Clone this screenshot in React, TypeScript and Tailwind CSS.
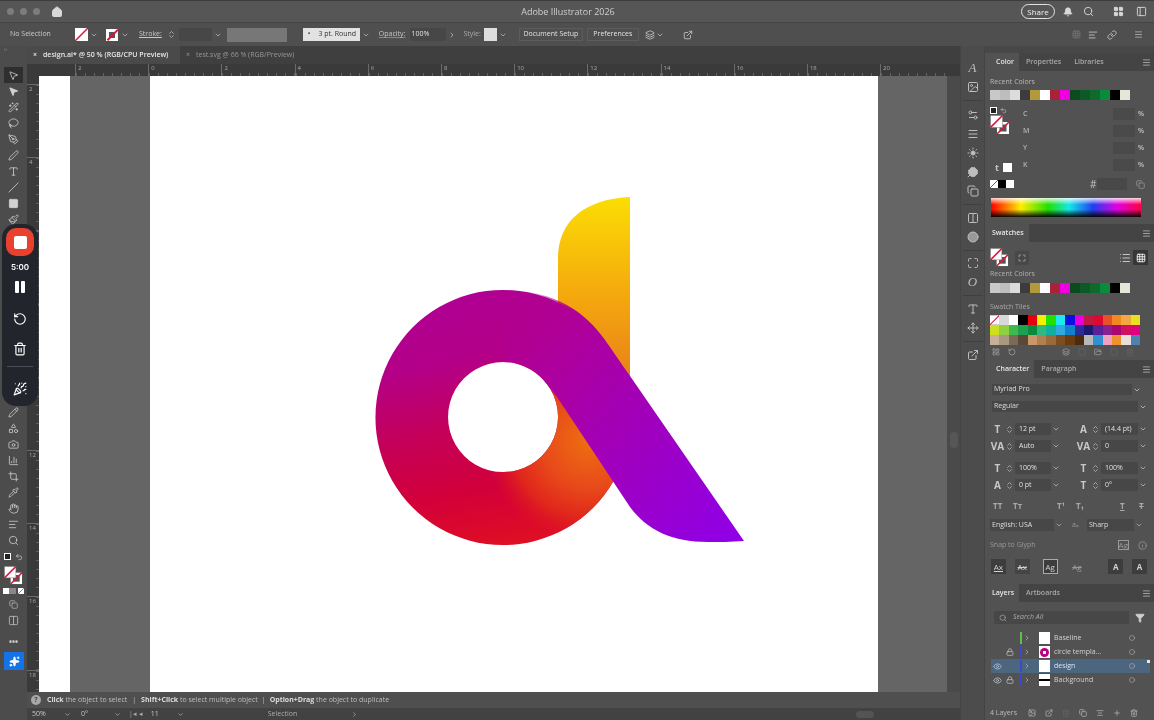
import React from "react";
import {
  MousePointer2, Wand2, Lasso, PenTool, Pen, Type, Slash, Square, Paintbrush, Pencil, Layers, Camera, BarChart3, Crop,
  Pipette, Hand, AlignLeft, Search, RotateCcw, Trash2, PartyPopper, ChevronDown, ChevronRight, ChevronsUpDown, Bell,
  Eye, Lock, Filter, Menu, Sun, Clover, Copy, House, Info, ExternalLink, LayoutGrid, List, Grid3x3, Sparkles, FolderOpen,
  Plus, Circle, PanelLeft, Columns2, Shapes, Undo2, Link, Settings2, AlignCenter, Maximize, Image, Move
} from "lucide-react";

const recent = ["#c8c8c8", "#bdbdbd", "#dcdcdc", "#3d3a40", "#b29a3a", "#ffffff", "#a8233a", "#ee00e0", "#0c4a20", "#0d5a26", "#0f6a2d", "#0a8a3c", "#000000", "#e6e6d8"];
const tiles = [
  "#ffffff", "#d8d8d8", "#ffffff", "#000000", "#e60012", "#f5ee00", "#22e000", "#1fe8f0", "#0a10e0", "#e600e0", "#c01a40", "#dd0a30", "#e8502a", "#f08a20", "#f0a840", "#e8e020",
  "#cce020", "#8fcf40", "#40b850", "#1ea050", "#0a8a3c", "#30b880", "#10b0a0", "#30a8e0", "#1080c8", "#2a2a98", "#1a1a70", "#5a2098", "#8a2090", "#a80870", "#d01060", "#e00080",
  "#c8b098", "#a89880", "#7a6a58", "#5a4838", "#c8986a", "#b08050", "#986a3c", "#7a4e20", "#6a3a10", "#4a2a10", "#b8b8b8", "#3090d0", "#f0a0c0", "#f09030", "#e8e0d8", "#5080b0",
];

function None({ className = "" }: { className?: string }) {
  return (
    <svg viewBox="0 0 14 14" className={className}>
      <rect x="0" y="0" width="14" height="14" fill="#fff" />
      <line x1="0" y1="14" x2="14" y2="0" stroke="#d8163c" strokeWidth="1.6" />
    </svg>
  );
}

function Proxy({ className = "" }: { className?: string }) {
  return (
    <svg viewBox="0 0 20 20" className={className}>
      <rect x="7" y="7" width="12" height="12" fill="#fff" />
      <rect x="9.5" y="9.5" width="7" height="7" fill="#555" />
      <line x1="7" y1="19" x2="19" y2="7" stroke="#d8163c" strokeWidth="1.6" />
      <rect x="0.5" y="0.5" width="12" height="12" fill="#fff" stroke="#777" strokeWidth="0.5" />
      <line x1="0.5" y1="12.5" x2="12.5" y2="0.5" stroke="#d8163c" strokeWidth="1.6" />
    </svg>
  );
}

function Tool({ icon: I, active, filled }: { icon: any; active?: boolean; filled?: boolean }) {
  return (
    <div className={`w-[19px] h-[16px] mx-auto flex items-center justify-center ${active ? "bg-[#2f2f2f]" : ""}`}>
      <I size={11} strokeWidth={1.7} className="text-[#d2d2d2]" fill={filled ? "#d2d2d2" : "none"} />
    </div>
  );
}

function HRuler() {
  const labels = ["2", "0", "2", "4", "6", "8", "10", "12", "14", "16", "18", "20"];
  return (
    <div className="h-[12px] bg-[#3a3a3a] flex pl-[48px] overflow-hidden shrink-0">
      {labels.map((l, i) => (
        <div key={i} className="w-[73.2px] shrink-0 border-l border-[#6a6a6a] relative pl-[2px] text-[6px] leading-[9px] text-[#a8a8a8]">
          {l}
          <div className="absolute left-0 right-0 bottom-0 h-[3px] bg-[repeating-linear-gradient(90deg,#626262_0,#626262_1px,transparent_1px,transparent_9px)]" />
        </div>
      ))}
    </div>
  );
}

function VRuler() {
  const labels = ["2", "4", "6", "8", "10", "12", "14", "16", "18"];
  return (
    <div className="w-[12px] bg-[#3a3a3a] flex flex-col pt-[8px] overflow-hidden shrink-0">
      {labels.map((l, i) => (
        <div key={i} className="h-[73.2px] shrink-0 border-t border-[#6a6a6a] relative text-[6px] text-[#a8a8a8] pl-[2px] leading-[9px]">
          {l}
          <div className="absolute top-0 bottom-0 right-0 w-[3px] bg-[repeating-linear-gradient(180deg,#626262_0,#626262_1px,transparent_1px,transparent_9px)]" />
        </div>
      ))}
    </div>
  );
}

const RING = "M503 290 A127.5 127.5 0 1 1 502.9 290 Z M503 362 A55 55 0 1 0 503.1 362 Z";

function Logo() {
  return (
    <svg viewBox="150 76 728 616" className="w-full h-full block">
      <defs>
        <linearGradient id="y" gradientUnits="userSpaceOnUse" x1="595" y1="197" x2="595" y2="380">
          <stop offset="0" stopColor="#fbdd04" />
          <stop offset="0.55" stopColor="#f4a70e" />
          <stop offset="1" stopColor="#e8801a" />
        </linearGradient>
        <linearGradient id="r" gradientUnits="userSpaceOnUse" x1="490" y1="285" x2="540" y2="545">
          <stop offset="0" stopColor="#b00094" />
          <stop offset="0.26" stopColor="#b40088" />
          <stop offset="0.5" stopColor="#c4005c" />
          <stop offset="0.75" stopColor="#d2003a" />
          <stop offset="0.92" stopColor="#dc0a28" />
          <stop offset="1" stopColor="#de1224" />
        </linearGradient>
        <radialGradient id="o" gradientUnits="userSpaceOnUse" cx="590" cy="440" r="105">
          <stop offset="0" stopColor="#ee7010" />
          <stop offset="0.45" stopColor="#e84a1a" />
          <stop offset="0.75" stopColor="#e0261c" />
          <stop offset="1" stopColor="#de1224" stopOpacity="0" />
        </radialGradient>
        <linearGradient id="b" gradientUnits="userSpaceOnUse" x1="490" y1="322" x2="745" y2="540">
          <stop offset="0" stopColor="#b00094" stopOpacity="0" />
          <stop offset="0.16" stopColor="#b00096" />
          <stop offset="1" stopColor="#8f00ea" />
        </linearGradient>
      </defs>
      <path d="M630 197 C586 199 558 220 558 258 L558 310 L630 385 Z" fill="url(#y)" />
      <path fillRule="evenodd" d={RING} fill="url(#r)" />
      <path fillRule="evenodd" d={RING} fill="url(#o)" />
      <path d="M503 290 C544 290 578 304 602 336 C606 341 610 347 630 376 L744 541 C730 542 720 542 708 542 C672 542 647 530 630 507 L557 397 L544 380.4 A55 55 0 0 0 503 362 Z" fill="url(#b)" />
    </svg>
  );
}

function PanelTabs({ tabs, pad = "pl-[7px]" }: { tabs: string[]; pad?: string }) {
  return (
    <div className="h-[18px] bg-[#444] flex items-stretch shrink-0">
      {tabs.map((t, i) => (
        <div key={t} className={`flex items-center text-[7px] font-semibold ${i === 0 ? `bg-[#525252] text-[#e6e6e6] pr-[5px] ${pad}` : "text-[#a9a9a9] pl-[7px] pr-[6px]"}`}>{t}</div>
      ))}
      <div className="flex-1" />
      <Menu size={9} className="self-center mr-[3px] text-[#bdbdbd]" />
    </div>
  );
}

function Spin() {
  return <ChevronsUpDown size={9} className="text-[#bcbcbc] shrink-0" />;
}

function CharField({ glyph, value, w }: { glyph: string; value: string; w: string }) {
  return (
    <div className={`flex items-center ${w}`}>
      <span className="w-[15px] text-center text-[10px] font-bold text-[#c8c8c8] leading-none">{glyph}</span>
      <Spin />
      <div className="flex-1 h-[12px] ml-[1px] bg-[#474747] flex items-center pl-[4px] text-[7px] text-[#e0e0e0]">{value}</div>
      <ChevronDown size={8} className="text-[#cfcfcf] ml-[1px]" />
    </div>
  );
}

function LayerRow({ name, color, eye, lock, sel, thumb }: { name: string; color: string; eye?: boolean; lock?: boolean; sel?: boolean; thumb?: React.ReactNode }) {
  return (
    <div className={`relative h-[14px] ml-[6px] mr-[4px] flex items-center ${sel ? "bg-[#4d6680]" : ""}`}>
      <div className="w-[12px] flex justify-center">{eye && <Eye size={9} className="text-[#b8c8d8]" />}</div>
      <div className="w-[14px] flex justify-center">{lock && <Lock size={8} className="text-[#c8c8c8]" />}</div>
      <div className={`w-[2px] h-[12px] ${color} ml-[3px]`} />
      <ChevronRight size={8} className="text-[#bcbcbc] ml-[1px]" />
      <div className="w-[11px] h-[12px] bg-white ml-[8px] flex items-center justify-center shrink-0">{thumb}</div>
      <span className={`ml-[4px] text-[7px] flex-1 ${sel ? "text-[#d8e4ee]" : "text-[#d2d2d2]"}`}>{name}</span>
      <Circle size={6} className="text-[#bcbcbc] mr-[15px]" />
      {sel && <div className="absolute top-[1px] right-0 w-[3px] h-[3px] bg-[#e8e8e8]" />}
    </div>
  );
}

function DockRule() {
  return <div className="w-[20px] h-px bg-[#3f3f3f]" />;
}

export default function App() {
  return (
    <div className="relative w-[1154px] h-[720px] overflow-hidden flex flex-col bg-[#525252] font-['Open_Sans','Liberation_Sans',sans-serif] blur-[0.45px]">
      {/* title bar */}
      <div className="h-[22px] bg-[#565656] flex items-center relative shrink-0 border-t border-[#3c3c3c]">
        <div className="flex gap-[6px] ml-[7px]">
          <div className="w-[7px] h-[7px] rounded-full bg-[#7c7c7c]" />
          <div className="w-[7px] h-[7px] rounded-full bg-[#7c7c7c]" />
          <div className="w-[7px] h-[7px] rounded-full bg-[#7c7c7c]" />
        </div>
        <House size={12} fill="#d8d8d8" className="text-[#d8d8d8] ml-[11px]" />
        <div className="flex-1 text-center text-[9px] text-[#cfcfcf] ml-[52px]">Adobe Illustrator 2026</div>
        <div className="w-[34px] h-[15px] rounded-full border border-[#e2e2e2] text-[8px] text-[#f0f0f0] flex items-center justify-center mr-[8px]">Share</div>
        <Bell size={10} fill="#d8d8d8" className="text-[#d8d8d8] mr-[10px]" />
        <Search size={11} className="text-[#d8d8d8] mr-[19px]" />
        <LayoutGrid size={11} fill="#d8d8d8" className="text-[#d8d8d8] mr-[12px]" />
        <PanelLeft size={11} className="text-[#d8d8d8] mr-[7px]" />
      </div>

      {/* control bar */}
      <div className="h-[24px] bg-[#4f4f4f] flex items-center shrink-0 border-t border-[#444] text-[7px] text-[#c8c8c8]">
        <span className="ml-[10px] w-[65px]">No Selection</span>
        <None className="w-[13px] h-[13px]" />
        <ChevronDown size={8} className="ml-[2px]" />
        <div className="ml-[8px] w-[12px] h-[12px] bg-white relative flex items-center justify-center">
          <div className="w-[6px] h-[6px] bg-[#555]" />
          <div className="absolute w-[15px] h-[1.5px] bg-[#d8163c] -rotate-45" />
        </div>
        <ChevronDown size={8} className="ml-[3px]" />
        <span className="ml-[10px] underline">Stroke:</span>
        <div className="ml-[5px]"><Spin /></div>
        <div className="ml-[3px] w-[33px] h-[13px] bg-[#474747]" />
        <ChevronDown size={8} className="ml-[2px]" />
        <div className="ml-[5px] w-[60px] h-[14px] bg-[#777]" />
        <div className="ml-[16px] w-[57px] h-[13px] bg-[#e2e2e2] text-[#333] flex items-center pl-[5px]">•<span className="ml-[8px]">3 pt. Round</span></div>
        <ChevronDown size={8} className="ml-[2px]" />
        <span className="ml-[9px] underline decoration-[#888]">Opacity:</span>
        <div className="ml-[5px] w-[36px] h-[13px] bg-[#474747] text-[#e0e0e0] flex items-center pl-[1px]">100%</div>
        <ChevronRight size={8} className="ml-[2px]" />
        <span className="ml-[7px] text-[#aaa]">Style:</span>
        <div className="ml-[3px] w-[13px] h-[13px] bg-[#dedede]" />
        <ChevronDown size={8} className="ml-[2px]" />
        <div className="ml-[12px] w-[64px] h-[13px] border border-[#5c5c5c] flex items-center justify-center text-[#e0e0e0]">Document Setup</div>
        <div className="ml-[4px] w-[52px] h-[13px] border border-[#5c5c5c] flex items-center justify-center text-[#e0e0e0]">Preferences</div>
        <Layers size={10} className="ml-[6px]" />
        <ChevronDown size={8} className="ml-[1px]" />
        <ExternalLink size={10} className="ml-[19px]" />
        <div className="flex-1" />
        <Grid3x3 size={9} className="text-[#777] mr-[7px]" />
        <AlignLeft size={10} className="mr-[9px]" />
        <Link size={10} className="mr-[17px]" />
        <Menu size={9} className="mr-[11px] text-[#bbb]" />
      </div>

      {/* body */}
      <div className="flex-1 min-h-0 flex">
        {/* toolbar */}
        <div className="w-[27px] bg-[#4c4c4c] flex flex-col shrink-0">
          <div className="h-[21px] text-[5px] text-[#999] pl-[4px]">››</div>
          <Tool icon={MousePointer2} active />
          <Tool icon={MousePointer2} filled />
          <Tool icon={Wand2} />
          <Tool icon={Lasso} />
          <Tool icon={PenTool} />
          <Tool icon={Pen} />
          <Tool icon={Type} />
          <Tool icon={Slash} />
          <Tool icon={Square} filled />
          <Tool icon={Paintbrush} />
          <div className="h-[177px] shrink-0" />
          <Tool icon={Pencil} />
          <Tool icon={Shapes} />
          <Tool icon={Camera} />
          <Tool icon={BarChart3} />
          <Tool icon={Crop} />
          <Tool icon={Pipette} />
          <Tool icon={Hand} />
          <Tool icon={AlignLeft} />
          <Tool icon={Search} />
          <div className="h-[9px] flex items-center justify-center gap-[4px] mt-[4px]">
            <div className="w-[7px] h-[7px] bg-[#222] border border-white" />
            <Undo2 size={8} className="text-[#ccc]" />
          </div>
          <Proxy className="w-[19px] h-[19px] ml-[4px] mt-[5px]" />
          <div className="flex items-center justify-center gap-[2px] mt-[3px]">
            <div className="w-[13px] h-[6px] bg-[linear-gradient(90deg,#fff_50%,#888_50%)]" />
            <None className="w-[6px] h-[6px]" />
          </div>
          <div className="mt-[6px] flex justify-center"><Copy size={9} className="text-[#b4b4b4]" /></div>
          <div className="mt-[6px] flex justify-center"><Columns2 size={11} className="text-[#b4b4b4]" /></div>
          <div className="mt-[12px] text-center text-[8px] leading-[8px] text-[#ccc] font-bold">•••</div>
          <div className="mt-[6px] ml-[4px] w-[20px] h-[18px] bg-[#1473e6] flex items-center justify-center">
            <Sparkles size={11} fill="#fff" className="text-white" />
          </div>
        </div>

        {/* centre */}
        <div className="w-[933px] shrink-0 flex flex-col min-w-0">
          <div className="h-[18px] bg-[#3f3f3f] flex shrink-0 text-[7px]">
            <div className="w-[153px] bg-[#4a4a4a] flex items-center pl-[6px] text-[#e8e8e8] font-semibold"><span className="mr-[6px]">×</span>design.ai* @ 50 % (RGB/CPU Preview)</div>
            <div className="flex items-center pl-[6px] text-[#969696]"><span className="mr-[6px]">×</span>test.svg @ 66 % (RGB/Preview)</div>
          </div>
          <HRuler />
          <div className="flex-1 min-h-0 flex">
            <VRuler />
            <div className="flex-1 min-w-0 flex bg-[#656565]">
              <div className="w-[31px] bg-white shrink-0" />
              <div className="w-[80px] shrink-0" />
              <div className="w-[728px] bg-white shrink-0"><Logo /></div>
            </div>
            <div className="w-[13px] bg-[#4a4a4a] shrink-0 flex flex-col items-center pt-[356px]">
              <div className="w-[8px] h-[16px] bg-[#565656] rounded-sm" />
            </div>
          </div>
          <div className="h-[16px] bg-[#4f4f4f] flex items-center shrink-0 text-[7px] text-[#bdbdbd] pl-[4px]">
            <div className="w-[10px] h-[10px] rounded-full bg-[#a8a8a8] text-[#444] text-[7px] font-bold flex items-center justify-center">?</div>
            <span className="ml-[6px]"><b className="text-[#ddd]">Click</b> the object to select<span className="mx-[5px]">|</span><b className="text-[#ddd]">Shift+Click</b> to select multiple object<span className="mx-[4px]">|</span><b className="text-[#ddd]">Option+Drag</b> the object to duplicate</span>
          </div>
          <div className="h-[12px] bg-[#424242] flex items-center shrink-0 text-[7px] text-[#c8c8c8] pl-[5px]">
            <span className="w-[32px]">50%</span><ChevronDown size={7} />
            <span className="ml-[10px] w-[33px]">0°</span><ChevronDown size={7} />
            <span className="ml-[8px] text-[#aaa]">|◂ ◂</span>
            <span className="ml-[8px] w-[26px]">11</span><ChevronDown size={7} />
            <span className="ml-[84px] text-[#aaa]">Selection</span>
            <ChevronRight size={7} className="ml-[54px]" />
            <div className="ml-[498px] w-[18px] h-[7px] bg-[#545454] rounded-sm" />
          </div>
        </div>

        {/* dock */}
        <div className="w-[25px] shrink-0 bg-[#4c4c4c] flex flex-col items-center pt-[16px] gap-[7px] border-l border-[#444] border-r text-[#bdbdbd]">
          <span className="font-['Liberation_Serif',serif] italic text-[13px] leading-[12px]">A</span>
          <Image size={12} />
          <DockRule />
          <div className="-mt-[1px] h-[2px]" />
          <Settings2 size={12} className="-mt-[7px]" />
          <Menu size={12} />
          <Sun size={12} fill="#bdbdbd" />
          <Clover size={12} fill="#bdbdbd" />
          <Copy size={12} />
          <DockRule />
          <Columns2 size={12} />
          <Circle size={12} fill="#999" />
          <DockRule />
          <Maximize size={12} className="-mt-[1px]" />
          <span className="font-['Liberation_Serif',serif] italic text-[13px] leading-[12px]">O</span>
          <DockRule />
          <Type size={12} />
          <Move size={12} />
          <DockRule />
          <ExternalLink size={12} />
        </div>

        {/* panels */}
        <div className="w-[169px] shrink-0 flex flex-col bg-[#525252] text-[#c4c4c4]">
          <div className="h-[7px] bg-[#474747] shrink-0" />
          {/* Color */}
          <div className="h-[171px] shrink-0 flex flex-col">
            <PanelTabs tabs={["Color", "Properties", "Libraries"]} pad="pl-[11px]" />
            <div className="px-[5px]">
              <div className="text-[7px] leading-[9px] mt-[6px] text-[#b8b8b8]">Recent Colors</div>
              <div className="flex mt-[4px]">{recent.map((c, i) => <div key={i} style={{ backgroundColor: c }} className="w-[10px] h-[10px]" />)}</div>
              <div className="flex mt-[5px]">
                <div className="w-[33px] shrink-0">
                  <div className="flex gap-[3px] mt-[2px]">
                    <div className="w-[7px] h-[7px] bg-[#222] border border-white" />
                    <Undo2 size={7} />
                  </div>
                  <Proxy className="w-[20px] h-[20px] mt-[1px]" />
                  <div className="flex items-center gap-[4px] mt-[28px] pl-[5px]">
                    <span className="text-[9px] font-bold leading-none">t</span>
                    <div className="w-[9px] h-[9px] bg-white" />
                  </div>
                </div>
                <div className="flex-1 flex flex-col gap-[5px] pt-[3px] pr-[5px]">
                  {["C", "M", "Y", "K"].map((l) => (
                    <div key={l} className="h-[12px] flex items-center text-[7px] font-semibold">
                      <span className="flex-1 text-[#b0b0b0]">{l}</span>
                      <div className="w-[22px] h-[12px] bg-[#4a4a4a]" />
                      <span className="w-[9px] text-right">%</span>
                    </div>
                  ))}
                </div>
              </div>
              <div className="flex items-center h-[10px] mt-[7px]">
                <None className="w-[8px] h-[8px]" />
                <div className="w-[8px] h-[8px] bg-black" />
                <div className="w-[8px] h-[8px] bg-white" />
                <span className="ml-[76px] text-[10px] leading-none">#</span>
                <div className="ml-[1px] w-[30px] h-[12px] bg-[#484848]" />
                <Copy size={9} className="ml-[9px] text-[#9a9a9a]" />
              </div>
              <div className="relative mt-[9px] w-[150px] h-[19px] ml-[1px] bg-[linear-gradient(90deg,#ff0000,#ffee00_20%,#22e000_38%,#14e8e8_52%,#2040f0_68%,#e000e0_84%,#ff0040)]">
                <div className="absolute inset-0 bg-[linear-gradient(180deg,rgba(255,255,255,0.85),rgba(255,255,255,0)_35%,rgba(0,0,0,0)_60%,rgba(0,0,0,0.95))]" />
              </div>
            </div>
          </div>
          {/* Swatches */}
          <div className="h-[136px] shrink-0 flex flex-col">
            <PanelTabs tabs={["Swatches"]} />
            <div className="px-[5px]">
              <div className="flex items-center h-[19px] mt-[6px]">
                <Proxy className="w-[19px] h-[19px]" />
                <div className="ml-[6px] w-[14px] h-[14px] bg-[#484848] flex items-center justify-center"><Maximize size={8} /></div>
                <div className="flex-1" />
                <List size={12} className="mr-[2px]" />
                <div className="w-[15px] h-[15px] bg-[#363636] flex items-center justify-center mr-[1px]"><Grid3x3 size={10} className="text-white" /></div>
              </div>
              <div className="text-[7px] leading-[9px] mt-[2px] text-[#b0b0b0]">Recent Colors</div>
              <div className="flex mt-[5px]">{recent.map((c, i) => <div key={i} style={{ backgroundColor: c }} className="w-[10px] h-[10px]" />)}</div>
              <div className="text-[7px] leading-[9px] mt-[9px] text-[#a8a8a8]">Swatch Tiles</div>
              <div className="grid grid-cols-[repeat(16,9.4px)] mt-[4px]">
                {tiles.map((c, i) => i === 0
                  ? <None key={i} className="w-[9.4px] h-[10px]" />
                  : <div key={i} style={{ backgroundColor: c }} className="h-[10px]" />)}
              </div>
              <div className="flex items-center mt-[3px] gap-[8px] pl-[2px] text-[#a8a8a8]">
                <LayoutGrid size={8} /><RotateCcw size={8} /><span className="w-[30px]" /><Layers size={8} /><Square size={8} className="text-[#666]" /><FolderOpen size={8} /><Square size={8} className="text-[#666]" /><Trash2 size={8} className="text-[#666]" />
              </div>
            </div>
          </div>
          {/* Character */}
          <div className="h-[224px] shrink-0 flex flex-col">
            <PanelTabs tabs={["Character", "Paragraph"]} pad="pl-[11px]" />
            <div className="px-[7px]">
              <div className="flex items-center h-[11px] mt-[6px] text-[7px] text-[#dedede]">
                <div className="w-[140px] h-[11px] bg-[#474747] flex items-center pl-[2px]">Myriad Pro</div>
                <ChevronDown size={8} className="ml-[1px]" />
              </div>
              <div className="flex items-center h-[11px] mt-[6px] text-[7px] text-[#dedede]">
                <div className="w-[146px] h-[11px] bg-[#474747] flex items-center pl-[2px]">Regular</div>
                <ChevronDown size={8} className="ml-[1px]" />
              </div>
            </div>
            <div className="pl-[5px] pr-[7px] flex flex-col mt-[11px] text-[#bdbdbd]">
              <div className="flex justify-between h-[12px]"><CharField glyph="T" value="12 pt" w="w-[70px]" /><CharField glyph="A" value="(14.4 pt)" w="w-[71px]" /></div>
              <div className="flex justify-between h-[12px] mt-[5px]"><CharField glyph="VA" value="Auto" w="w-[70px]" /><CharField glyph="VA" value="0" w="w-[71px]" /></div>
              <div className="flex justify-between h-[12px] mt-[10px]"><CharField glyph="T" value="100%" w="w-[70px]" /><CharField glyph="T" value="100%" w="w-[71px]" /></div>
              <div className="flex justify-between h-[12px] mt-[5px]"><CharField glyph="A" value="0 pt" w="w-[70px]" /><CharField glyph="T" value="0°" w="w-[71px]" /></div>
              <div className="flex items-center h-[12px] mt-[9px] text-[8px] font-bold text-[#a8a8a8] pl-[3px]">
                <span className="w-[20px]">TT</span><span className="w-[44px]">Tт</span><span className="w-[19px]">T¹</span><span className="w-[44px]">T₁</span><span className="w-[19px] underline">T</span><span className="line-through">T</span>
              </div>
              <div className="flex items-center h-[12px] mt-[7px] text-[7px]">
                <div className="w-[64px] h-[12px] bg-[#474747] flex items-center pl-[2px] text-[#dedede]">English: USA</div>
                <ChevronDown size={8} className="ml-[1px]" />
                <span className="ml-[9px] w-[15px] text-[#999]">aₐ</span>
                <div className="w-[47px] h-[12px] bg-[#474747] flex items-center pl-[2px] text-[#dedede]">Sharp</div>
                <ChevronDown size={8} className="ml-[1px]" />
              </div>
              <div className="flex items-center h-[12px] mt-[8px] text-[7px] text-[#999]">
                <span className="flex-1">Snap to Glyph</span>
                <span className="text-[8px] border border-[#999] leading-[8px] mr-[9px]">Ag</span>
                <Info size={9} />
              </div>
              <div className="flex items-center mt-[8px] text-[8px] text-[#d2d2d2] pl-[1px]">
                <div className="w-[15px] h-[15px] bg-[#3d3d3d] flex items-center justify-center underline">Ax</div>
                <div className="ml-[9px] w-[15px] h-[15px] bg-[#454545] flex items-center justify-center line-through">Ax</div>
                <div className="ml-[13px] w-[15px] h-[15px] bg-[#3d3d3d] flex items-center justify-center border border-[#aaa]">Ag</div>
                <div className="ml-[12px] w-[15px] h-[15px] flex items-center justify-center text-[#999] line-through">Ag</div>
                <div className="ml-[24px] w-[15px] h-[15px] bg-[#3d3d3d] flex items-center justify-center font-bold">A</div>
                <div className="ml-[9px] w-[15px] h-[15px] bg-[#3d3d3d] flex items-center justify-center font-bold">A</div>
              </div>
            </div>
          </div>
          {/* Layers */}
          <div className="flex-1 min-h-0 flex flex-col relative">
            <PanelTabs tabs={["Layers", "Artboards"]} />
            <div className="flex items-center mx-[9px] mt-[9px]">
              <div className="w-[136px] h-[13px] bg-[#474747] flex items-center pl-[5px] text-[7px] italic text-[#aaa]">
                <Search size={8} className="mr-[6px]" />Search All
              </div>
              <Filter size={10} fill="#cfcfcf" className="ml-[6px] text-[#cfcfcf]" />
            </div>
            <div className="mt-[7px]">
              <LayerRow name="Baseline" color="bg-[#5fc04a]" />
              <LayerRow name="circle templa..." color="bg-[#3a4ad0]" lock thumb={<div className="w-[9px] h-[9px] rounded-full bg-[radial-gradient(circle,#fff_25%,#b000a0_30%,#d00030_100%)]" />} />
              <LayerRow name="design" color="bg-[#3a4ad0]" eye sel />
              <LayerRow name="Background" color="bg-[#3a4ad0]" eye lock thumb={<div className="w-full h-[2px] bg-black" />} />
            </div>
            <div className="flex-1" />
            <div className="h-[14px] flex items-center pl-[5px] text-[7px] text-[#bdbdbd] gap-[9px]">
              <span className="mr-[0px] w-[29px]">4 Layers</span>
              <Image size={8} /><ExternalLink size={8} /><Trash2 size={8} className="text-[#666]" /><Copy size={8} /><AlignCenter size={8} /><Plus size={8} /><Trash2 size={8} />
            </div>
          </div>
        </div>
      </div>

      {/* screen-recorder overlay */}
      <div className="absolute left-[2px] top-[224px] w-[36px] h-[182px] rounded-[14px] bg-[#22252b] flex flex-col items-center text-white">
        <div className="mt-[4px] w-[28px] h-[28px] rounded-[10px] bg-[#e8412f] flex items-center justify-center">
          <div className="w-[13px] h-[13px] bg-white rounded-[2px]" />
        </div>
        <div className="mt-[5px] text-[8px] font-semibold leading-[12px] font-['Inter',sans-serif]">5:00</div>
        <div className="mt-[8px] flex gap-[2px]">
          <div className="w-[4px] h-[12px] bg-white rounded-[1px]" />
          <div className="w-[4px] h-[12px] bg-white rounded-[1px]" />
        </div>
        <RotateCcw size={14} className="mt-[19px]" />
        <Trash2 size={14} className="mt-[16px]" />
        <div className="mt-[10px] w-[26px] h-px bg-[#4a4d55]" />
        <PartyPopper size={14} className="mt-[15px]" />
      </div>
    </div>
  );
}
